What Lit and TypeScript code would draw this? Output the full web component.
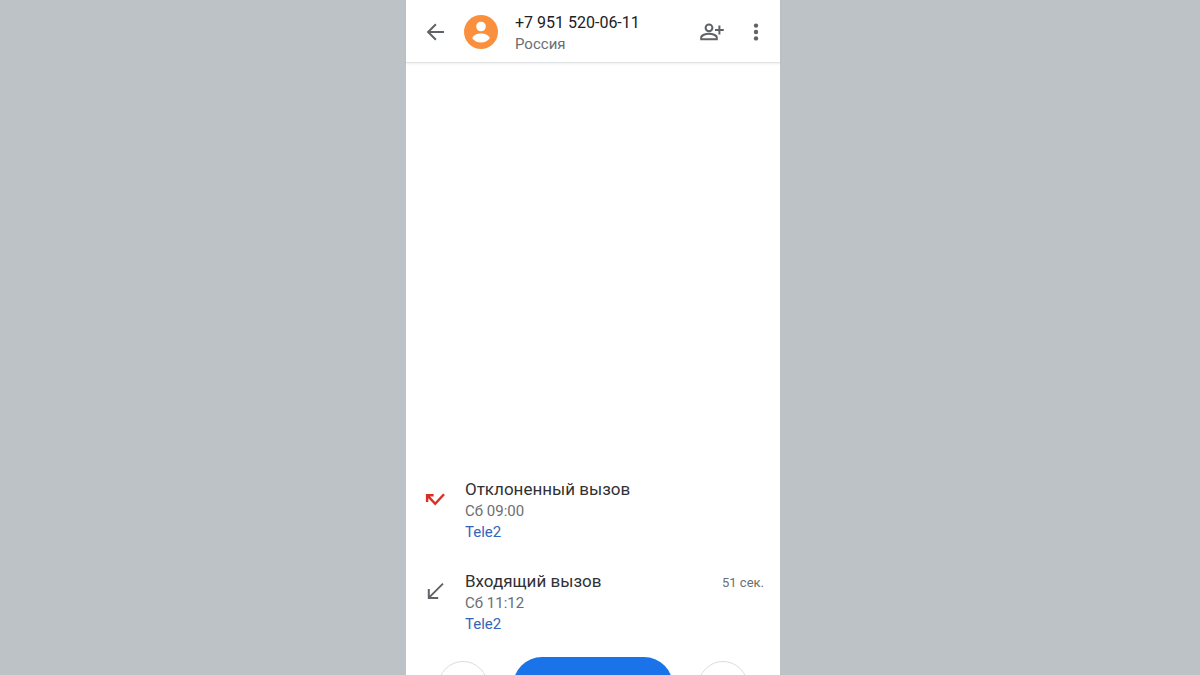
import { LitElement, html, css, svg, nothing } from "lit";
import { customElement, property } from "lit/decorators.js";

type CallKind = "declined" | "incoming";

interface Call {
  kind: CallKind;
  title: string;
  time: string;
  sim: string;
  duration?: string;
}

const calls: Call[] = [
  { kind: "declined", title: "Отклоненный вызов", time: "Сб 09:00", sim: "Tele2" },
  { kind: "incoming", title: "Входящий вызов", time: "Сб 11:12", sim: "Tele2", duration: "51 сек." },
];

const callIcons = {
  declined: svg`<path d="M4.1 14V7.2H10.6M4.5 7.600l7.700 8.200 8.800-9.500" />`,
  incoming: svg`<path d="M20 3.600 6 17.600M5.800 9v9h9.400" />`,
};

@customElement("call-entry")
export class CallEntry extends LitElement {
  @property({ attribute: false }) call!: Call;

  static styles = css`
    :host {
      display: grid;
      grid-template-columns: 24px 1fr auto;
      column-gap: 18px;
      padding: 0 16px 0 17px;
    }
    .icon {
      width: 24px;
      height: 24px;
      margin-top: 10px;
      fill: none;
      stroke: #5f6368;
      stroke-width: 2;
    }
    .declined {
      stroke: #d93025;
      stroke-width: 2.4;
    }
    .title {
      font-size: 17px;
      line-height: 23px;
      color: #303134;
    }
    .time {
      font-size: 15px;
      line-height: 21px;
      color: #6b6e72;
    }
    .sim {
      font-size: 15px;
      line-height: 21px;
      color: #3564ba;
    }
    .duration {
      font-size: 13px;
      line-height: 26px;
      color: #6b6e72;
    }
  `;

  render() {
    const { kind, title, time, sim, duration } = this.call;
    return html`
      <svg class="icon ${kind}" viewBox="0 0 24 24" aria-hidden="true">${callIcons[kind]}</svg>
      <div>
        <div class="title">${title}</div>
        <div class="time">${time}</div>
        <div class="sim">${sim}</div>
      </div>
      ${duration ? html`<div class="duration">${duration}</div>` : nothing}
    `;
  }
}

@customElement("app-root")
export class AppRoot extends LitElement {
  static styles = css`
    :host {
      box-sizing: border-box;
      display: flex;
      justify-content: center;
      height: 100vh;
      padding-right: 14px;
      overflow: hidden;
      background: #bdc2c6;
      font-family: Roboto, "Noto Sans", sans-serif;
    }
    .phone {
      display: flex;
      flex-direction: column;
      flex: 0 1 374px;
      min-width: 0;
      background: #fff;
    }
    button {
      box-sizing: border-box;
      margin: 0;
      padding: 0;
      border: 0;
      background: none;
      font: inherit;
    }
    .bar {
      box-sizing: border-box;
      display: flex;
      align-items: center;
      height: 63px;
      padding: 2px 12px 0 17px;
      border-bottom: 1px solid #e2e3e4;
      box-shadow: 0 1px 2px #00000012;
    }
    .tool {
      display: grid;
      place-items: center;
      width: 24px;
      height: 24px;
      color: #5f6368;
    }
    .tool svg {
      display: block;
      overflow: visible;
    }
    .avatar {
      width: 34px;
      height: 34px;
      margin: 0 17px;
    }
    .person {
      flex: 1;
      min-width: 0;
      padding-top: 2px;
    }
    .number {
      margin: 0;
      font-size: 16px;
      font-weight: 400;
      line-height: 22px;
      color: #202124;
    }
    .country {
      font-size: 15px;
      line-height: 20px;
      color: #6b6e72;
    }
    .more {
      margin-left: 20px;
    }
    .history {
      display: flex;
      flex: 1;
      flex-direction: column;
      justify-content: flex-end;
      gap: 27px;
      padding-bottom: 22px;
    }
    .actions {
      display: flex;
      align-items: flex-start;
      justify-content: space-between;
      flex: 0 0 18px;
      min-height: 0;
      height: 18px;
      padding: 0 32px;
    }
    .round {
      width: 50px;
      height: 50px;
      margin-top: 4px;
      border: 1px solid #dadce0;
      border-radius: 50%;
    }
    .dial {
      width: 160px;
      height: 58px;
      border-radius: 29px;
      background: #1a73e8;
    }
  `;

  render() {
    return html`
      <main class="phone">
        <header class="bar">
          <button class="tool" aria-label="Назад">
            <svg width="24" height="24" viewBox="0 0 24 24" fill="none" stroke="currentColor" stroke-width="2">
              <path d="M21 12H5.500M12.900 4.200 5.100 12l7.800 7.800" />
            </svg>
          </button>
          <svg class="avatar" viewBox="0 0 34 34" aria-hidden="true">
            <circle cx="17" cy="17" r="17" fill="#fa903e" />
            <circle cx="17" cy="11.5" r="4.8" fill="#fff" />
            <path d="M8.2 23.2c1-3.4 5.6-4.8 8.8-4.8s7.8 1.4 8.8 4.8c-2 2.8-5.2 4.4-8.8 4.4s-6.8-1.6-8.8-4.4z" fill="#fff" />
          </svg>
          <div class="person">
            <h1 class="number">+7 951 520-06-11</h1>
            <div class="country">Россия</div>
          </div>
          <button class="tool" aria-label="Добавить контакт">
            <svg width="24" height="24" viewBox="0 0 24 24" fill="none" stroke="currentColor" stroke-width="2">
              <circle cx="9" cy="7.8" r="3.4" />
              <path d="M1.2 19.2v-1.6c0-2.6 4.6-3.8 7.8-3.8s7.8 1.2 7.8 3.8v1.6zM19.4 5.6v9M15 10.1h8.8" />
            </svg>
          </button>
          <button class="tool more" aria-label="Ещё">
            <svg width="24" height="24" viewBox="0 0 24 24" fill="currentColor">
              <circle cx="12" cy="5.6" r="2.2" />
              <circle cx="12" cy="12" r="2.2" />
              <circle cx="12" cy="18.4" r="2.2" />
            </svg>
          </button>
        </header>
        <section class="history" aria-label="История вызовов">
          ${calls.map((call) => html`<call-entry .call=${call}></call-entry>`)}
        </section>
        <footer class="actions">
          <button class="round" aria-label="Сообщение"></button>
          <button class="dial" aria-label="Позвонить"></button>
          <button class="round" aria-label="Видеовызов"></button>
        </footer>
      </main>
    `;
  }
}
